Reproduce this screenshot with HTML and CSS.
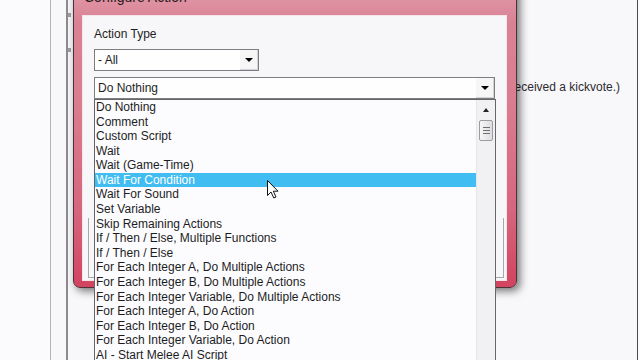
FILE: index.html
```html
<!DOCTYPE html>
<html>
<head>
<meta charset="utf-8">
<link rel="stylesheet" href="styles.css">
</head>
<body>
<div class="desk">
  <div class="bg-window">
    <div class="splitter"><span class="tick t1"></span><span class="tick t2"></span></div>
    <div class="msg">(Player received a kickvote.)</div>
  </div>

  <div class="dialog">
    <div class="titlebar">Configure Action</div>
    <div class="client">
      <div class="label">Action Type</div>
      <div class="combo combo-type">
        <span class="val">- All</span>
        <span class="btn"><i class="tri-down"></i></span>
      </div>
      <div class="combo-wrap">
        <div class="combo combo-action">
          <span class="val">Do Nothing</span>
          <span class="btn"><i class="tri-down"></i></span>
        </div>
        <div class="droplist">
          <ul class="items">
            <li>Do Nothing</li>
            <li>Comment</li>
            <li>Custom Script</li>
            <li>Wait</li>
            <li>Wait (Game-Time)</li>
            <li class="sel">Wait For Condition</li>
            <li>Wait For Sound</li>
            <li>Set Variable</li>
            <li>Skip Remaining Actions</li>
            <li>If / Then / Else, Multiple Functions</li>
            <li>If / Then / Else</li>
            <li>For Each Integer A, Do Multiple Actions</li>
            <li>For Each Integer B, Do Multiple Actions</li>
            <li>For Each Integer Variable, Do Multiple Actions</li>
            <li>For Each Integer A, Do Action</li>
            <li>For Each Integer B, Do Action</li>
            <li>For Each Integer Variable, Do Action</li>
            <li>AI - Start Melee AI Script</li>
            <li>AI - Start Campaign AI Script</li>
          </ul>
          <div class="vscroll">
            <div class="sb-up"><i class="tri-up"></i></div>
            <div class="sb-thumb"><i></i><i></i><i></i></div>
          </div>
        </div>
      </div>
      <div class="panel"></div>
    </div>
  </div>

  <svg class="cursor" width="14" height="21" viewBox="0 0 14 21">
    <path d="M1.5 1.5 L1.5 16.5 L5 13 L7.8 19 L10 18 L7.3 12.2 L12 12.2 Z" fill="#fff" stroke="#111" stroke-width="1" stroke-linejoin="round"/>
  </svg>
</div>
</body>
</html>
```

FILE: styles.css
```css
* { box-sizing: border-box; }
html, body { margin: 0; padding: 0; }
body {
  width: 640px;
  height: 360px;
  overflow: hidden;
  background: #fbfafd;
  font-family: "Liberation Sans", Arial, sans-serif;
  color: #1e1e1e;
}
.desk {
  position: relative;
  width: 640px;
  height: 360px;
  overflow: hidden;
}

/* background window */
.bg-window {
  position: absolute;
  left: 50px;
  top: 0;
  width: 588px;
  height: 360px;
  border-left: 1px solid #b4b4b8;
  border-right: 1px solid #4a4a4e;
  background: #f8f7fa;
}
.splitter {
  position: absolute;
  left: 15px;
  top: 0;
  width: 2px;
  height: 360px;
  background: #8c8c90;
}
.tick {
  position: absolute;
  left: 2px;
  width: 3px;
  height: 4px;
  background: #a0a0a4;
}
.t1 { top: 13px; }
.t2 { top: 48px; }
.msg {
  position: absolute;
  right: 17px;
  top: 80px;
  font-size: 12px;
  line-height: 14px;
  color: #2c2c30;
}

/* dialog */
.dialog {
  position: absolute;
  left: 73px;
  top: -15px;
  width: 444px;
  height: 303px;
  border: 1px solid #4c3238;
  border-radius: 7px;
  background: linear-gradient(180deg, #e29cab 0%, #d98294 12%, #da7c8f 40%, #d6657d 75%, #d2435f 100%);
  box-shadow: 3px 3px 9px rgba(0,0,0,0.55);
  padding: 0 9px 6px 8px;
  display: flex;
  flex-direction: column;
}
.titlebar {
  height: 29px;
  line-height: 22px;
  font-size: 14px;
  color: #2a1a1e;
  padding-left: 2px;
  white-space: nowrap;
}
.client {
  flex: 1;
  position: relative;
  background: #f7f7f9;
  border: 1px solid #f4e6ea;
  padding: 11px 11px 0 11px;
}
.label {
  font-size: 12px;
  line-height: 14px;
  margin-bottom: 8px;
}
.combo {
  display: flex;
  align-items: center;
  height: 22px;
  background: #fefefe;
  border: 1px solid #7e7e82;
  font-size: 12px;
}
.combo .val { padding-left: 3px; }
.combo .btn {
  margin-left: auto;
  width: 18px;
  height: 20px;
  display: flex;
  align-items: center;
  justify-content: center;
  background: #f6f6f7;
  border-right: 1px solid #d2d2d4;
  border-bottom: 1px solid #d2d2d4;
}
.tri-down {
  width: 0; height: 0;
  border-left: 4px solid transparent;
  border-right: 4px solid transparent;
  border-top: 4px solid #000;
}
.tri-up {
  width: 0; height: 0;
  border-left: 3.5px solid transparent;
  border-right: 3.5px solid transparent;
  border-bottom: 4px solid #222;
}
.combo-type { width: 165px; }
.combo-wrap {
  position: relative;
  margin-top: 6px;
}
.combo-action { width: 401px; }

.droplist {
  position: absolute;
  left: 0;
  top: 22px;
  width: 402px;
  height: 300px;
  border: 1px solid #66666a;
  background: #fcfcfe;
  z-index: 5;
}
.items {
  list-style: none;
  margin: 0;
  padding: 0;
  width: 381px;
}
.items li {
  height: 14.59px;
  line-height: 15.5px;
  font-size: 12px;
  padding-left: 1px;
  white-space: nowrap;
  color: #1c1c1e;
}
.items li.sel {
  background: #42bdf2;
  color: #fff;
}
.vscroll {
  position: absolute;
  top: 0;
  right: 0;
  bottom: 0;
  width: 19px;
  background: #f1f1f3;
  border-left: 1px solid #e6e6e8;
}
.sb-up {
  height: 19px;
  display: flex;
  align-items: center;
  justify-content: center;
}
.sb-thumb {
  margin: 1px 2px 0 2px;
  height: 21px;
  border: 1px solid #9c9ca0;
  border-radius: 2px;
  background: linear-gradient(90deg, #f6f6f7, #dedee0);
  display: flex;
  flex-direction: column;
  align-items: center;
  justify-content: center;
  gap: 2px;
}
.sb-thumb i {
  display: block;
  width: 7px;
  height: 1px;
  background: #6e6e72;
}

.panel {
  position: absolute;
  left: 5px;
  right: 2px;
  bottom: 2px;
  height: 60px;
  border: 1px solid #a8a8ac;
  border-top: none;
}

.cursor {
  position: absolute;
  left: 266px;
  top: 179px;
  z-index: 10;
}
```
